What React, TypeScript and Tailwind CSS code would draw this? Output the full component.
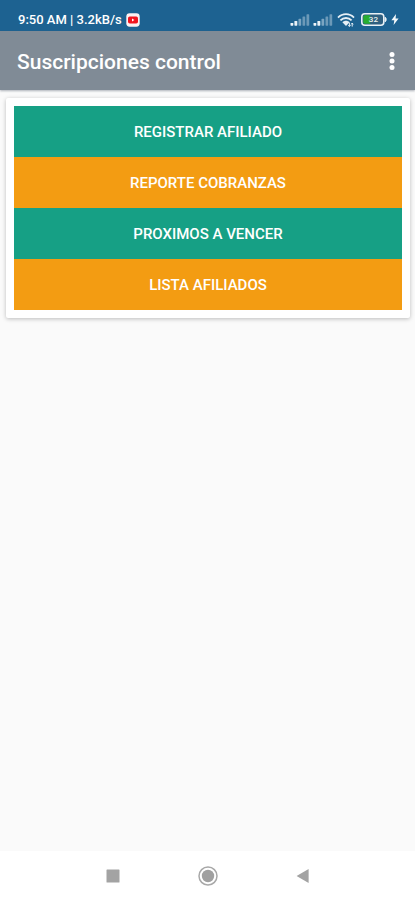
import React from 'react';

const menuItems = [
  { id: 'registrar', label: 'REGISTRAR AFILIADO', color: 'bg-[#16a085]' },
  { id: 'reporte', label: 'REPORTE COBRANZAS', color: 'bg-[#f39c12]' },
  { id: 'proximos', label: 'PROXIMOS A VENCER', color: 'bg-[#16a085]' },
  { id: 'lista', label: 'LISTA AFILIADOS', color: 'bg-[#f39c12]' },
];

function YoutubeIcon() {
  return (
    <svg width="14" height="14" viewBox="0 0 14 14" aria-hidden="true">
      <rect x="0.3" y="0.3" width="13.4" height="13.4" rx="3.4" fill="#fbf1f2" />
      <rect x="2" y="3.5" width="10" height="7" rx="1.8" fill="#f0141e" />
      <path d="M6 5.6v2.8L8.4 7z" fill="#fff" />
    </svg>
  );
}

function SignalIcon() {
  return (
    <svg width="20" height="12" viewBox="0 0 20 12" aria-hidden="true">
      <rect x="0.5" y="9" width="2.8" height="2.7" rx="0.6" fill="#f1f6fa" />
      <rect x="4.4" y="7" width="2.9" height="4.7" rx="0.6" fill="#e8f0f6" />
      <rect x="8.5" y="4.8" width="2.7" height="6.9" rx="0.6" fill="#7ba5c2" />
      <rect x="12.5" y="2.5" width="2.7" height="9.2" rx="0.6" fill="#6c99b8" />
      <rect x="16.5" y="0.3" width="2.7" height="11.4" rx="0.6" fill="#6c99b8" />
    </svg>
  );
}

function WifiIcon() {
  return (
    <svg width="18" height="14" viewBox="0 0 18 14" fill="none" stroke="#e6eff6" aria-hidden="true">
      <path d="M1 4.6C5.5 0 12.5 0 17 4.6" strokeWidth="1.8" />
      <path d="M3.4 7.4c3.2-3.2 8-3.2 11.2 0" strokeWidth="1.8" />
      <path d="M5.4 9.2c2-2 5.2-2 7.2 0L9 13z" fill="#e6eff6" stroke="none" />
      <path d="M12.4 9.6v3.8M11.3 12.2l1.1 1.3 1.1-1.3M15.2 13.6v-3.4M14.1 11.3l1.1-1.2 1.1 1.2" strokeWidth="1" />
    </svg>
  );
}

function BatteryIcon() {
  return (
    <svg width="26" height="13" viewBox="0 0 26 13" aria-hidden="true">
      <rect x="0.8" y="0.8" width="22" height="11.4" rx="3" fill="#2f5f80" stroke="#e9f1f6" strokeWidth="1.6" />
      <path d="M24 4.2c1.7.3 1.7 4.3 0 4.6z" fill="#e9f1f6" stroke="#e9f1f6" strokeWidth="0.8" />
      <path d="M3.8 2.3h5.4v8.4H3.8a1.6 1.6 0 0 1-1.5-1.5V3.8a1.6 1.6 0 0 1 1.5-1.5z" fill="#27ae2f" />
      <text x="12.4" y="9.4" textAnchor="middle" fontSize="8" fontWeight="500" fill="#eef4ee">
        32
      </text>
    </svg>
  );
}

function BoltIcon() {
  return (
    <svg width="8" height="11" viewBox="0 0 8 11" aria-hidden="true">
      <path d="M5 0L0.4 6.3h2.9L2.6 11 7.6 4.5H4.6z" fill="#f3f8fb" />
    </svg>
  );
}

function StatusBar() {
  return (
    <div className="flex h-[31px] items-center justify-between bg-[#1d6291] pt-2 pr-4 pl-[18px] text-white">
      <div className="flex items-center gap-1">
        <span className="text-[13px] leading-4 font-medium whitespace-nowrap">9:50 AM | 3.2kB/s</span>
        <YoutubeIcon />
      </div>
      <div className="flex items-center">
        <div className="flex gap-[3px]">
          <SignalIcon />
          <SignalIcon />
        </div>
        <div className="ml-1 flex items-center gap-1">
          <WifiIcon />
          <div className="flex items-center gap-1 pl-[2px]">
            <BatteryIcon />
            <BoltIcon />
          </div>
        </div>
      </div>
    </div>
  );
}

function AppBar() {
  return (
    <header className="flex h-[59px] items-center justify-between bg-[#808b96] pr-[11px] pl-[17px] text-white shadow-[0_1px_2px_rgba(60,70,90,0.4)]">
      <h1 className="pt-[2px] text-[21px] leading-6 font-medium">Suscripciones control</h1>
      <button type="button" aria-label="Más opciones" className="flex h-10 w-6 items-center justify-center">
        <svg width="6" height="18" viewBox="0 0 6 18" fill="#fff">
          <circle cx="3" cy="2.6" r="2.5" />
          <circle cx="3" cy="9" r="2.5" />
          <circle cx="3" cy="15.4" r="2.5" />
        </svg>
      </button>
    </header>
  );
}

function NavigationBar() {
  return (
    <nav className="grid h-[49px] grid-cols-3 items-center bg-white px-[65px]">
      <button type="button" aria-label="Recientes" className="flex h-10 items-center justify-center">
        <svg width="14" height="14" viewBox="0 0 14 14">
          <rect x="0.5" y="0.5" width="13" height="13" rx="0.6" fill="#a3a3a3" />
        </svg>
      </button>
      <button type="button" aria-label="Inicio" className="flex h-10 items-center justify-center">
        <svg width="20" height="20" viewBox="0 0 20 20">
          <circle cx="10" cy="10" r="9" fill="none" stroke="#a8a8a8" strokeWidth="1.5" />
          <circle cx="10" cy="10" r="6.2" fill="#a0a0a0" />
        </svg>
      </button>
      <button type="button" aria-label="Atrás" className="flex h-10 items-center justify-center">
        <svg width="14" height="16" viewBox="0 0 14 16">
          <path d="M0.6 8L12.6 1v14z" fill="#a3a3a3" />
        </svg>
      </button>
    </nav>
  );
}

export default function App() {
  return (
    <div className="flex min-h-screen flex-col bg-[#fafafa] font-['Roboto',sans-serif]">
      <StatusBar />
      <AppBar />
      <main className="flex-1 pt-2 pr-[5px] pl-[6px]">
        <section className="flex flex-col rounded-[2px] bg-white p-2 shadow-[0_1px_4px_rgba(0,0,0,0.25)]">
          {menuItems.map((item) => (
            <button
              key={item.id}
              type="button"
              className={`h-[51px] w-full text-[15px] leading-5 font-medium text-white ${item.color}`}
            >
              {item.label}
            </button>
          ))}
        </section>
      </main>
      <NavigationBar />
    </div>
  );
}
